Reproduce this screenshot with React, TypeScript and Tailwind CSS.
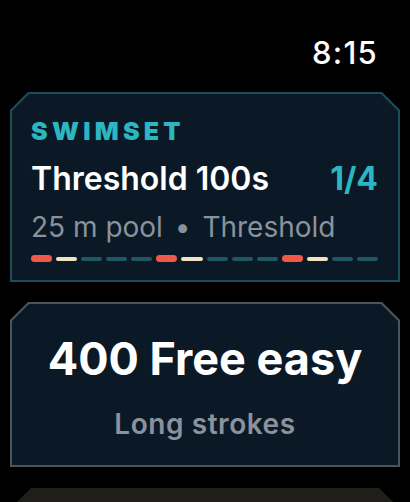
import React from "react";

const segs = ["r","c","t","t","t","r","c","t","t","t","r","c","t","t"];

export default function App() {
  return (
    <div className="w-[410px] h-[502px] bg-black overflow-hidden flex flex-col" style={{ fontFamily: "Inter, 'Noto Sans', sans-serif" }}>
      <div className="h-[92px] shrink-0 flex items-start justify-end pr-[32px] pt-[35px]">
        <span className="text-white text-[31px] leading-[36px] font-medium tracking-[0.04em]">8:15</span>
      </div>
      <div className="shrink-0 mx-[10px] h-[190px] bg-[#1c4d58] p-[2px] [clip-path:polygon(18px_0,calc(100%_-_18px)_0,100%_18px,100%_100%,0_100%,0_18px)]">
        <div className="h-full bg-[#0b1926] px-[19px] pt-[23px] [clip-path:polygon(17px_0,calc(100%_-_17px)_0,100%_17px,100%_100%,0_100%,0_17px)]">
          <div className="text-[#2bb6c1] text-[25px] leading-[28px] font-black tracking-[0.17em]">SWIMSET</div>
          <div className="mt-[15px] flex items-baseline justify-between pr-[1px]">
            <span className="text-white text-[32px] leading-[38px] font-semibold">Threshold 100s</span>
            <span className="text-[#2bb6c1] text-[32px] leading-[38px] font-bold">1/4</span>
          </div>
          <div className="mt-[12px] text-[#8a929d] text-[28px] leading-[34px] font-normal">25 m pool <span className="mx-[4px]">•</span> Threshold</div>
          <div className="mt-[11px] flex items-center gap-[4px] pr-[1px]">
            {segs.map((s, i) =>
              s === "r" ? (
                <div key={i} className="flex-1 h-[7px] rounded-full bg-[#f0584a]" />
              ) : s === "c" ? (
                <div key={i} className="flex-1 h-[4px] rounded-full bg-[#f2e2c4]" />
              ) : (
                <div key={i} className="flex-1 h-[4px] rounded-full bg-[#1e5763]" />
              )
            )}
          </div>
        </div>
      </div>
      <div className="shrink-0 mt-[20px] mx-[10px] h-[165px] bg-[#4a545c] p-[2px] [clip-path:polygon(18px_0,calc(100%_-_18px)_0,100%_18px,100%_100%,0_100%,0_18px)]">
        <div className="h-full bg-[#0b1926] flex flex-col items-center pt-[29px] [clip-path:polygon(17px_0,calc(100%_-_17px)_0,100%_17px,100%_100%,0_100%,0_17px)]">
          <div className="text-white text-[45px] leading-[52px] font-bold">400 Free easy</div>
          <div className="mt-[22px] text-[#8a929d] text-[28px] leading-[34px] font-semibold tracking-[0.02em]">Long strokes</div>
        </div>
      </div>
      <div className="mt-[21px] mx-[17px] h-[40px] shrink-0 bg-[#1f1e1b] [clip-path:polygon(14px_0,calc(100%_-_14px)_0,100%_14px,100%_100%,0_100%,0_14px)]" />
    </div>
  );
}
